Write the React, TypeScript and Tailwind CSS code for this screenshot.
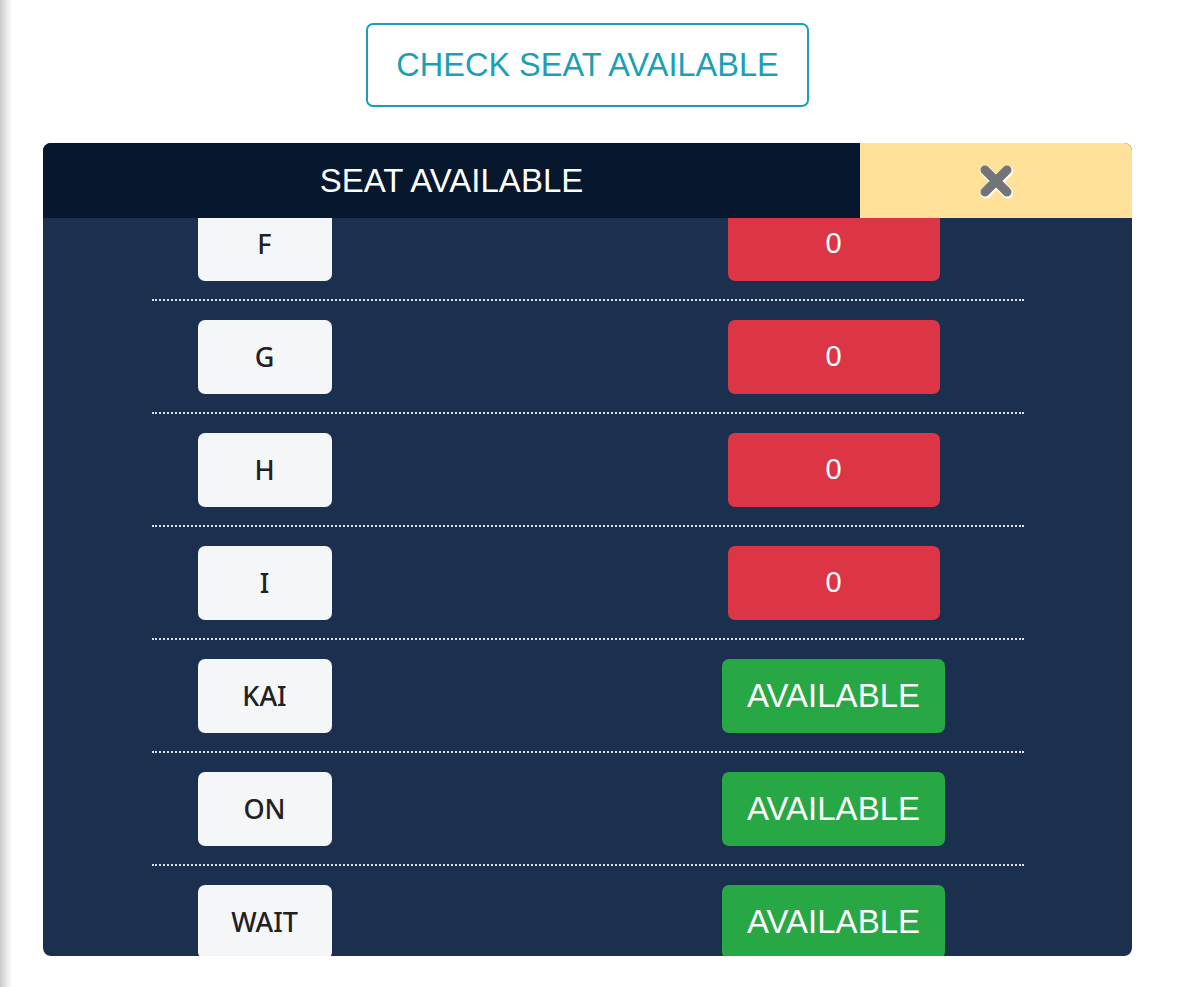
import React from "react";

type Row = { label: string; value: string; ok: boolean };

const rows: Row[] = [
  { label: "F", value: "0", ok: false },
  { label: "G", value: "0", ok: false },
  { label: "H", value: "0", ok: false },
  { label: "I", value: "0", ok: false },
  { label: "KAI", value: "AVAILABLE", ok: true },
  { label: "ON", value: "AVAILABLE", ok: true },
  { label: "WAIT", value: "AVAILABLE", ok: true },
];

function CloseIcon() {
  return (
    <svg width="40" height="40" viewBox="0 0 40 40">
      <g strokeLinecap="round" strokeLinejoin="round">
        <path d="M9 9 L31 31 M31 9 L9 31" stroke="#ffffff" strokeWidth="11" transform="translate(0.8 1.2)" />
        <path d="M9 9 L31 31 M31 9 L9 31" stroke="#737479" strokeWidth="9" />
      </g>
    </svg>
  );
}

export default function App() {
  return (
    <div className="flex min-h-[987px] w-full bg-white" style={{ fontFamily: '"Liberation Sans", Arial, sans-serif' }}>
      <div className="w-[12px] shrink-0 bg-gradient-to-r from-[#c9c9c9] via-[#e6e6e6] to-white" />
      <div className="flex-1">
        <div className="ml-[31px] w-[1089px] pt-[23px]">
          <div className="flex justify-center">
            <button className="flex h-[84px] w-[443px] items-center justify-center rounded-[7px] border-2 border-[#1b9fb4] bg-white text-[32.5px] text-[#1b9fb4]">
              CHECK SEAT AVAILABLE
            </button>
          </div>

          <div className="mt-[36px] overflow-hidden rounded-[8px] bg-[#1b2f4f]">
            <div className="flex h-[75px]">
              <div className="flex w-[817px] items-center justify-center bg-[#07172d] text-[33px] text-white">
                SEAT AVAILABLE
              </div>
              <div className="flex flex-1 items-center justify-center bg-[#ffe199]">
                <CloseIcon />
              </div>
            </div>
            <div className="h-[738px] overflow-hidden">
              <div className="mx-auto -mt-[30px] w-[872px]">
                {rows.map((r, i) => (
                  <div key={r.label}>
                    <div className="flex items-center pt-[19px] pb-[18px] pl-[46px]">
                      <div
                        className="flex h-[74px] w-[134px] items-center justify-center rounded-[7px] bg-[#f5f6f7] text-[27px] font-medium text-[#1f2124]"
                        style={{ fontFamily: '"Noto Sans", "Open Sans", sans-serif' }}
                      >
                        {r.label}
                      </div>
                      <div className="ml-[352px] flex w-[300px] justify-center">
                        {r.ok ? (
                          <div className="flex h-[74px] w-[223px] items-center justify-center rounded-[7px] bg-[#28a745] text-[33px] text-white">
                            {r.value}
                          </div>
                        ) : (
                          <div className="flex h-[74px] w-[212px] items-center justify-center rounded-[7px] bg-[#dc3545] text-[29px] text-white">
                            {r.value}
                          </div>
                        )}
                      </div>
                    </div>
                    {i < rows.length - 1 && <div className="border-t-2 border-dotted border-[#dfe4ec]" />}
                  </div>
                ))}
              </div>
            </div>
          </div>
        </div>
      </div>
    </div>
  );
}
